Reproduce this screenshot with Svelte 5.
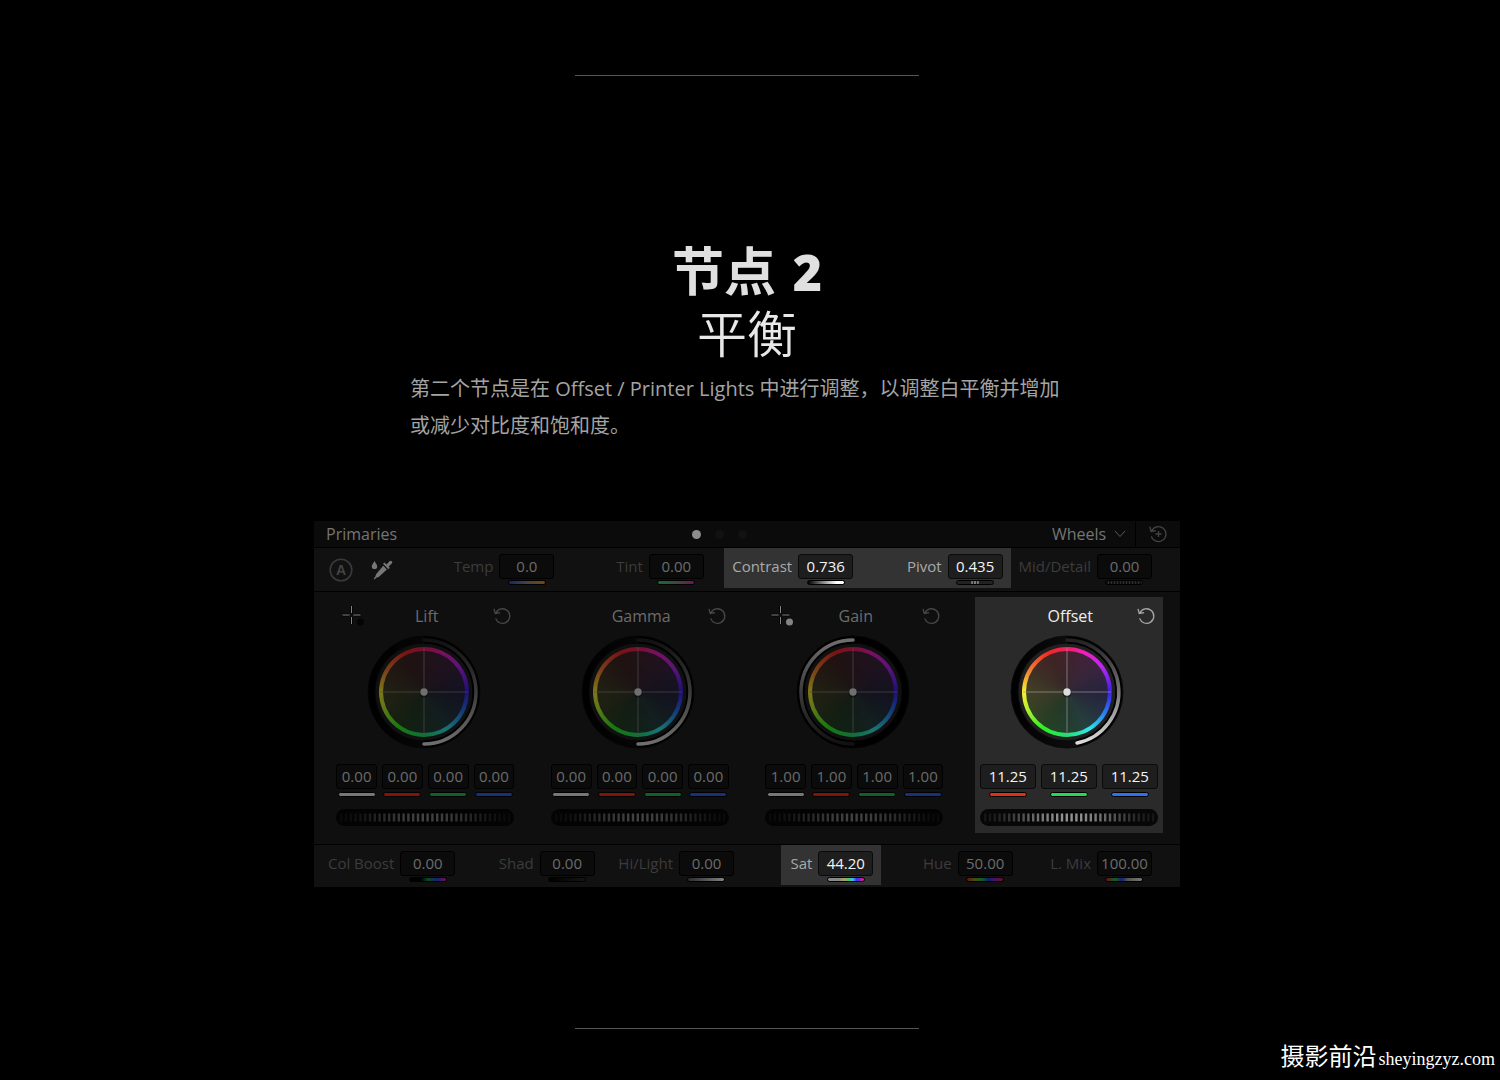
<script>
  const topControls = [
    { id: 'temp', label: 'Temp', value: '0.0', bar: 'temp' },
    { id: 'tint', label: 'Tint', value: '0.00', bar: 'tint' },
    { id: 'contrast', label: 'Contrast', value: '0.736', bar: 'contrast', lit: true, edge: 'start' },
    { id: 'pivot', label: 'Pivot', value: '0.435', bar: 'pivot', lit: true, edge: 'end' },
    { id: 'detail', label: 'Mid/Detail', value: '0.00', bar: 'detail' }
  ];

  const bottomControls = [
    { id: 'boost', label: 'Col Boost', value: '0.00', bar: 'boost' },
    { id: 'shad', label: 'Shad', value: '0.00', bar: 'shad' },
    { id: 'light', label: 'Hi/Light', value: '0.00', bar: 'light' },
    { id: 'sat', label: 'Sat', value: '44.20', bar: 'sat', lit: true, edge: 'only' },
    { id: 'hue', label: 'Hue', value: '50.00', bar: 'hue' },
    { id: 'mix', label: 'L. Mix', value: '100.00', bar: 'mix' }
  ];

  const yrgb = ['white', 'red', 'green', 'blue'];

  const wheels = [
    { name: 'Lift', picker: '#000', arc: 'M57 109A52 52 0 0 0 57 5', up: true, values: ['0.00', '0.00', '0.00', '0.00'], channels: yrgb },
    { name: 'Gamma', arc: 'M57 109A52 52 0 0 0 57 5', up: true, values: ['0.00', '0.00', '0.00', '0.00'], channels: yrgb },
    { name: 'Gain', picker: '#b4b4b4', arc: 'M57 5A52 52 0 0 0 57 109', up: false, values: ['1.00', '1.00', '1.00', '1.00'], channels: yrgb },
    { name: 'Offset', lit: true, arc: 'M67 108A52 52 0 0 0 57 5', up: true, values: ['11.25', '11.25', '11.25'], channels: ['red', 'green', 'blue'] }
  ];

  // ridges of the thumb wheel, brightest in the middle
  const ridges = Array.from({ length: 36 }, (_, i) => ({
    x: 4 + i * 4.8,
    opacity: Math.pow(Math.sin(((i + 0.5) / 36) * Math.PI), 1.8) * 0.5 + 0.06
  }));
</script>

{#snippet control(c)}
  <div class="control {c.edge || ''}" class:lit={c.lit}>
    <label for={c.id}>{c.label}</label>
    <div class="field">
      <input id={c.id} type="text" value={c.value} />
      <span class="bar {c.bar}"></span>
    </div>
  </div>
{/snippet}

<main>
  <hr />

  <section class="intro">
    <h1>节点 <b>2</b></h1>
    <h2>平衡</h2>
    <p>第二个节点是在 Offset / Printer Lights 中进行调整，以调整白平衡并增加或减少对比度和饱和度。</p>
  </section>

  <section class="panel">
    <header>
      <h3>Primaries</h3>
      <div class="pages">
        <button class="page current" aria-label="Page 1"></button>
        <button class="page" aria-label="Page 2"></button>
        <button class="page" aria-label="Page 3"></button>
      </div>
      <div class="mode">
        <select aria-label="Mode">
          <option>Wheels</option>
        </select>
        <svg class="chevron" width="12" height="8" viewBox="0 0 12 8"><path d="M1 1l5 5.5L11 1" /></svg>
        <button class="icon reset-all" aria-label="Reset all">
          <svg width="20" height="18" viewBox="0 0 20 18">
            <path d="M3.600 6A7.500 7.500 0 1 1 3.300 11.400M1.800 1.800l1.300 4.600 4.800-.8M10.500 6v6M7.500 9h6" />
          </svg>
        </button>
      </div>
    </header>

    <div class="row top">
      <div class="tools">
        <button class="icon" aria-label="Auto balance">
          <svg width="24" height="24" viewBox="0 0 24 24">
            <circle cx="12" cy="12" r="10.8" fill="none" stroke="#3a3a3a" stroke-width="1.6" />
            <text x="12" y="17" text-anchor="middle">A</text>
          </svg>
        </button>
        <button class="icon" aria-label="Pick white balance">
          <svg width="22" height="20" viewBox="0 0 22 20">
            <path fill="#777" d="M3.500 1C4.900 3.600 6.200 4.800 6.200 6.400A2.700 2.700 0 0 1 .8 6.400C.8 4.800 2.100 3.600 3.500 1z" />
            <path fill="#777" d="M15.500 4.500l3-3.200a1.600 1.600 0 0 1 2.300 2.300L17.600 6.600l1.200 1.200-1.400 1.400L12 3.800l1.400-1.400z" />
            <path fill="#777" d="M12.200 5.800l3.700 3.700-8.200 7.400-2.500.9L3.600 19.400l-.9-.9 1.500-1.700.9-2.600z" />
          </svg>
        </button>
      </div>
      <div class="controls five">
        {#each topControls as c}
          {@render control(c)}
        {/each}
      </div>
    </div>

    <div class="wheels">
      {#each wheels as w}
        <article class:lit={w.lit}>
          <div class="title">
            <div>
              {#if w.picker}
                <button class="icon" aria-label="{w.name} picker">
                  <svg width="24" height="26" viewBox="0 -4 24 26">
                    <path stroke="#000" stroke-width="3" d="M9.500 1v7M9.500 12v7M0 10h7M12 10h7" />
                    <path stroke="#b4b4b4" stroke-width="1" d="M9.500 1v7M9.500 12v7M.5 10h7M11.500 10h7" />
                    <circle cx="18.500" cy="17" r="3.500" fill={w.picker} />
                  </svg>
                </button>
              {/if}
            </div>
            <h4>{w.name}</h4>
            <button class="icon reset" aria-label="Reset {w.name}">
              <svg width="18" height="18" viewBox="0 0 18 18">
                <path d="M2.900 6A7.300 7.300 0 1 1 2.600 11.400M1 1.800l1.300 4.700 4.800-.8" />
              </svg>
            </button>
          </div>

          <div class="wheel">
            <svg width="114" height="114" viewBox="0 0 114 114">
              <defs>
                <linearGradient id="arc-{w.name}" gradientUnits="userSpaceOnUse" x1="0" y1={w.up ? 109 : 5} x2="0" y2={w.up ? 5 : 109}>
                  <stop offset="0" stop-color="#ddd" />
                  <stop offset="0.5" stop-color="#777" />
                  <stop offset="1" stop-color="#222" />
                </linearGradient>
                <linearGradient id="body-{w.name}" x1="0" y1="0.5" x2="1" y2="0.5">
                  <stop offset={w.up ? 0 : 1} stop-color="#000" />
                  <stop offset={w.up ? 1 : 0} stop-color="#181818" />
                </linearGradient>
              </defs>
              <circle cx="57" cy="57" r="56" fill="url(#body-{w.name})" stroke="#0a0a0a" />
              <circle cx="57" cy="57" r="49" fill="#202020" stroke="#0a0a0a" />
              <path class="track" d={w.arc} />
              <path class="arc" d={w.arc} stroke="url(#arc-{w.name})" />
            </svg>
            <div class="ring"></div>
            <div class="disc"></div>
            <svg width="114" height="114" viewBox="0 0 114 114">
              <path class="cross" d="M57 13v88M13 57h88" />
              <circle cx="57" cy="58" r="4.500" fill="#000" opacity="0.4" />
              <circle cx="57" cy="57" r="3.700" fill="#ddd" />
            </svg>
          </div>

          <div class="values">
            {#each w.values as v, i}
              <div class="field">
                <input type="text" aria-label="{w.name} {w.channels[i]}" value={v} />
                <span class="bar {w.channels[i]}"></span>
              </div>
            {/each}
          </div>

          <svg class="thumb" viewBox="0 0 178 17">
            <rect width="178" height="17" rx="8.500" fill="#070707" />
            {#each ridges as r}
              <rect x={r.x} y="4.500" width="2.400" height="8" fill="#fff" opacity={r.opacity} />
            {/each}
          </svg>
        </article>
      {/each}
    </div>

    <div class="row bottom">
      <div class="controls six">
        {#each bottomControls as c}
          {@render control(c)}
        {/each}
      </div>
    </div>
  </section>

  <hr />
  <div class="watermark">摄影前沿<span>sheyingzyz.com</span></div>
</main>

<style>
:global(body) {
  background: #000;
}
main {
  box-sizing: border-box;
  position: relative;
  display: flex;
  flex-direction: column;
  align-items: center;
  min-height: 100vh;
  padding: 75px 6px 51px 0;
  color: #ddd;
  font-family: "Open Sans", "Noto Sans CJK SC", sans-serif;
}
hr {
  width: 344px;
  max-width: 80%;
  margin: 0;
  border: none;
  border-top: 1px solid #555;
}

/* Intro text */
.intro {
  width: 100%;
  max-width: 674px;
  margin: 164px 0 77px;
}
h1, h2, h3, h4, p {
  margin: 0;
}
h1, h2 {
  text-align: center;
}
h1 {
  font-family: Lato, "Noto Sans CJK SC", sans-serif;
  font-size: 52px;
  font-weight: 700;
  line-height: 62px;
  color: #e0e0e0;
}
h1 b {
  margin-left: 4px;
  font-family: "Open Sans", sans-serif;
  font-size: 50px;
  font-weight: 800;
  line-height: 50px;
}
h2 {
  margin-bottom: 10px;
  font-family: "Noto Sans CJK SC", sans-serif;
  font-size: 50px;
  font-weight: 350;
  line-height: 58px;
  color: #e8e8e8;
}
p {
  padding-right: 8px;
  font-size: 20px;
  font-weight: 400;
  line-height: 37px;
  color: #a4a4a4;
}

/* Panel */
.panel {
  width: 100%;
  max-width: 866px;
  margin-bottom: 141px;
  background: #0f0f0f;
}
button {
  padding: 0;
  border: none;
  background: none;
  cursor: pointer;
}
.icon svg {
  display: block;
  fill: none;
}
header {
  display: grid;
  grid-template-columns: 7fr auto 8fr;
  align-items: center;
  height: 26px;
  background: #0b0b0b;
  border-bottom: 1px solid #000;
}
h3 {
  padding-left: 12px;
  font-size: 16px;
  font-weight: 500;
  line-height: 24px;
  color: #757575;
}
.pages {
  display: flex;
  gap: 14px;
}
.page {
  width: 9px;
  height: 9px;
  border-radius: 50%;
  background: #121212;
}
.page.current {
  background: #8c8c8c;
}
.mode {
  display: flex;
  align-items: center;
  justify-content: flex-end;
}
select {
  appearance: none;
  padding: 0;
  border: none;
  background: transparent;
  font-family: inherit;
  font-size: 16px;
  font-weight: 500;
  line-height: 24px;
  color: #757575;
}
.chevron {
  margin: 0 9px 0 7px;
  fill: none;
  stroke: #5a5a5a;
}
.reset-all {
  display: flex;
  align-items: center;
  justify-content: center;
  width: 45px;
  height: 26px;
  border-left: 1px solid #000;
}
.reset-all path {
  stroke: #444;
  stroke-width: 1.3;
}

/* Rows of controls */
.row {
  display: flex;
  height: 43px;
  background: #111;
}
.top {
  border-bottom: 1px solid #000;
}
.bottom {
  height: 42px;
  border-top: 1px solid #000;
}
.tools {
  display: flex;
  align-items: center;
  gap: 18px;
  width: 76px;
  padding-left: 15px;
}
.tools text {
  fill: #444;
  font-size: 14px;
  font-weight: 600;
}
.controls {
  flex: 1;
  display: grid;
  align-items: start;
}
.five {
  grid-template-columns: repeat(5, 1fr);
  padding-right: 28px;
}
.six {
  grid-template-columns: repeat(6, 1fr);
  padding: 0 28px 0 2px;
}
.control {
  display: flex;
  justify-content: flex-end;
  gap: 6px;
  height: 34px;
  padding-top: 6px;
  white-space: nowrap;
}
.control label {
  font-size: 15px;
  line-height: 25px;
  color: #3c3c3c;
}
.control.lit {
  background: #333;
}
.control.lit label {
  color: #aaa;
}
.control.start {
  margin-left: 20px;
}
.control.only {
  margin-left: 47px;
}
.control.end, .control.only {
  margin-right: -8px;
  padding-right: 8px;
}
.control .field {
  width: 55px;
}
.field {
  display: flex;
  flex-direction: column;
  align-items: center;
}
input {
  box-sizing: border-box;
  width: 100%;
  height: 25px;
  padding: 0 0 2px;
  border: 1px solid #000;
  border-radius: 3px;
  background: #0b0b0b;
  font-family: inherit;
  font-size: 15px;
  text-align: center;
  color: #6c6c6c;
}
.lit input {
  border-color: #0a0a0a;
  background: #1e1e1e;
  color: #f4f4f4;
}
.bar {
  box-sizing: border-box;
  width: 38px;
  height: 5px;
  border: 1px solid #000;
  border-radius: 3px;
}
.control .bar {
  margin-top: 1px;
}
.temp { background: linear-gradient(90deg, #14286a, #444, #7a4310); }
.tint { background: linear-gradient(90deg, #10702c, #444, #74124c); }
.contrast { background: linear-gradient(90deg, #000, #fff 80%); }
.pivot { background: linear-gradient(90deg, #222 38%, #999 42%, #222 46%, #aaa 50%, #222 54%, #999 58%, #222 62%); }
.detail { background: repeating-linear-gradient(90deg, #111 0 2px, #2e2e2e 2px 3px); }
.boost { background: linear-gradient(90deg, #000 30%, #0d4a20 50%, #14207a 75%, #7a1040); }
.shad { background: linear-gradient(90deg, #000, #161616); }
.light { background: linear-gradient(90deg, #2c2c2c, #808080); }
.sat { background: linear-gradient(90deg, #888 30%, #b0a060 45%, #30d070 60%, #40c0f0 68%, #3030f0 80%, #f02080); }
.hue { background: linear-gradient(90deg, #6a1010, #4a4a10, #106020, #10206a, #50106a, #6a1010); }
.mix { background: linear-gradient(90deg, #6a1010, #106020 25%, #14207a 45%, #555 60%, #777); }

/* Color wheels */
.wheels {
  display: grid;
  grid-template-columns: repeat(4, 1fr);
  padding: 5px 4px 11px;
}
article {
  width: 178px;
  height: 236px;
  margin: 0 auto;
  padding: 0 5px;
}
article.lit {
  background: #2a2a2a;
}
.title {
  display: grid;
  grid-template-columns: 1fr auto 1fr;
  align-items: center;
  height: 38px;
  padding: 0 3px 0 6px;
}
h4 {
  font-size: 16px;
  font-weight: 400;
  line-height: 38px;
  color: #6c6c6c;
}
.lit h4 {
  color: #eee;
}
.title .icon svg {
  opacity: 0.7;
}
.reset {
  justify-self: end;
}
.reset path {
  stroke: #606060;
  stroke-width: 1.3;
}
.lit .reset path {
  stroke: #ddd;
}
.wheel {
  display: grid;
  place-items: center;
  height: 114px;
  padding-right: 3px;
}
.wheel > * {
  grid-area: 1 / 1;
}
.wheel svg {
  display: block;
}
article:not(.lit) .wheel {
  filter: brightness(0.5);
}
.track {
  fill: none;
  stroke: #000;
  stroke-width: 7;
}
.arc {
  fill: none;
  stroke-width: 3.5;
  stroke-linecap: round;
}
.ring, .disc {
  border-radius: 50%;
  background: conic-gradient(#f02060, #f020c0 25deg, #b828f0 55deg, #3a20e8 90deg, #2a70f0 115deg, #30e8e8 150deg, #20e070 180deg, #30f020 215deg, #c0f030 250deg, #f8f030 270deg, #f08030 300deg, #f02828 335deg, #f02060);
}
.ring {
  width: 90px;
  height: 90px;
}
.disc {
  width: 82px;
  height: 82px;
  background-image: radial-gradient(#262626e8 20%, #202020d0), conic-gradient(#f02060, #f020c0 25deg, #b828f0 55deg, #3a20e8 90deg, #2a70f0 115deg, #30e8e8 150deg, #20e070 180deg, #30f020 215deg, #c0f030 250deg, #f8f030 270deg, #f08030 300deg, #f02828 335deg, #f02060);
}
.cross {
  stroke: #999;
  stroke-opacity: 0.7;
}
.values {
  display: flex;
  gap: 5px;
  margin-top: 15px;
}
.values .field {
  flex: 1;
  gap: 3px;
}
.white { background: #777; }
.red { background: #80140c; }
.green { background: #10602a; }
.blue { background: #18307a; }
.lit .red { background: #e03018; }
.lit .green { background: #28d850; }
.lit .blue { background: #3070e8; }
.thumb {
  display: block;
  width: 100%;
  margin-top: 12px;
}
article:not(.lit) .thumb {
  filter: brightness(0.45);
}

.watermark {
  position: absolute;
  right: 5px;
  bottom: 3px;
  font-family: "Noto Sans CJK SC", sans-serif;
  font-size: 24px;
  line-height: 36px;
  color: #fff;
}
.watermark span {
  margin-left: 2px;
  font-family: "Liberation Serif", serif;
  font-size: 18px;
}
</style>
